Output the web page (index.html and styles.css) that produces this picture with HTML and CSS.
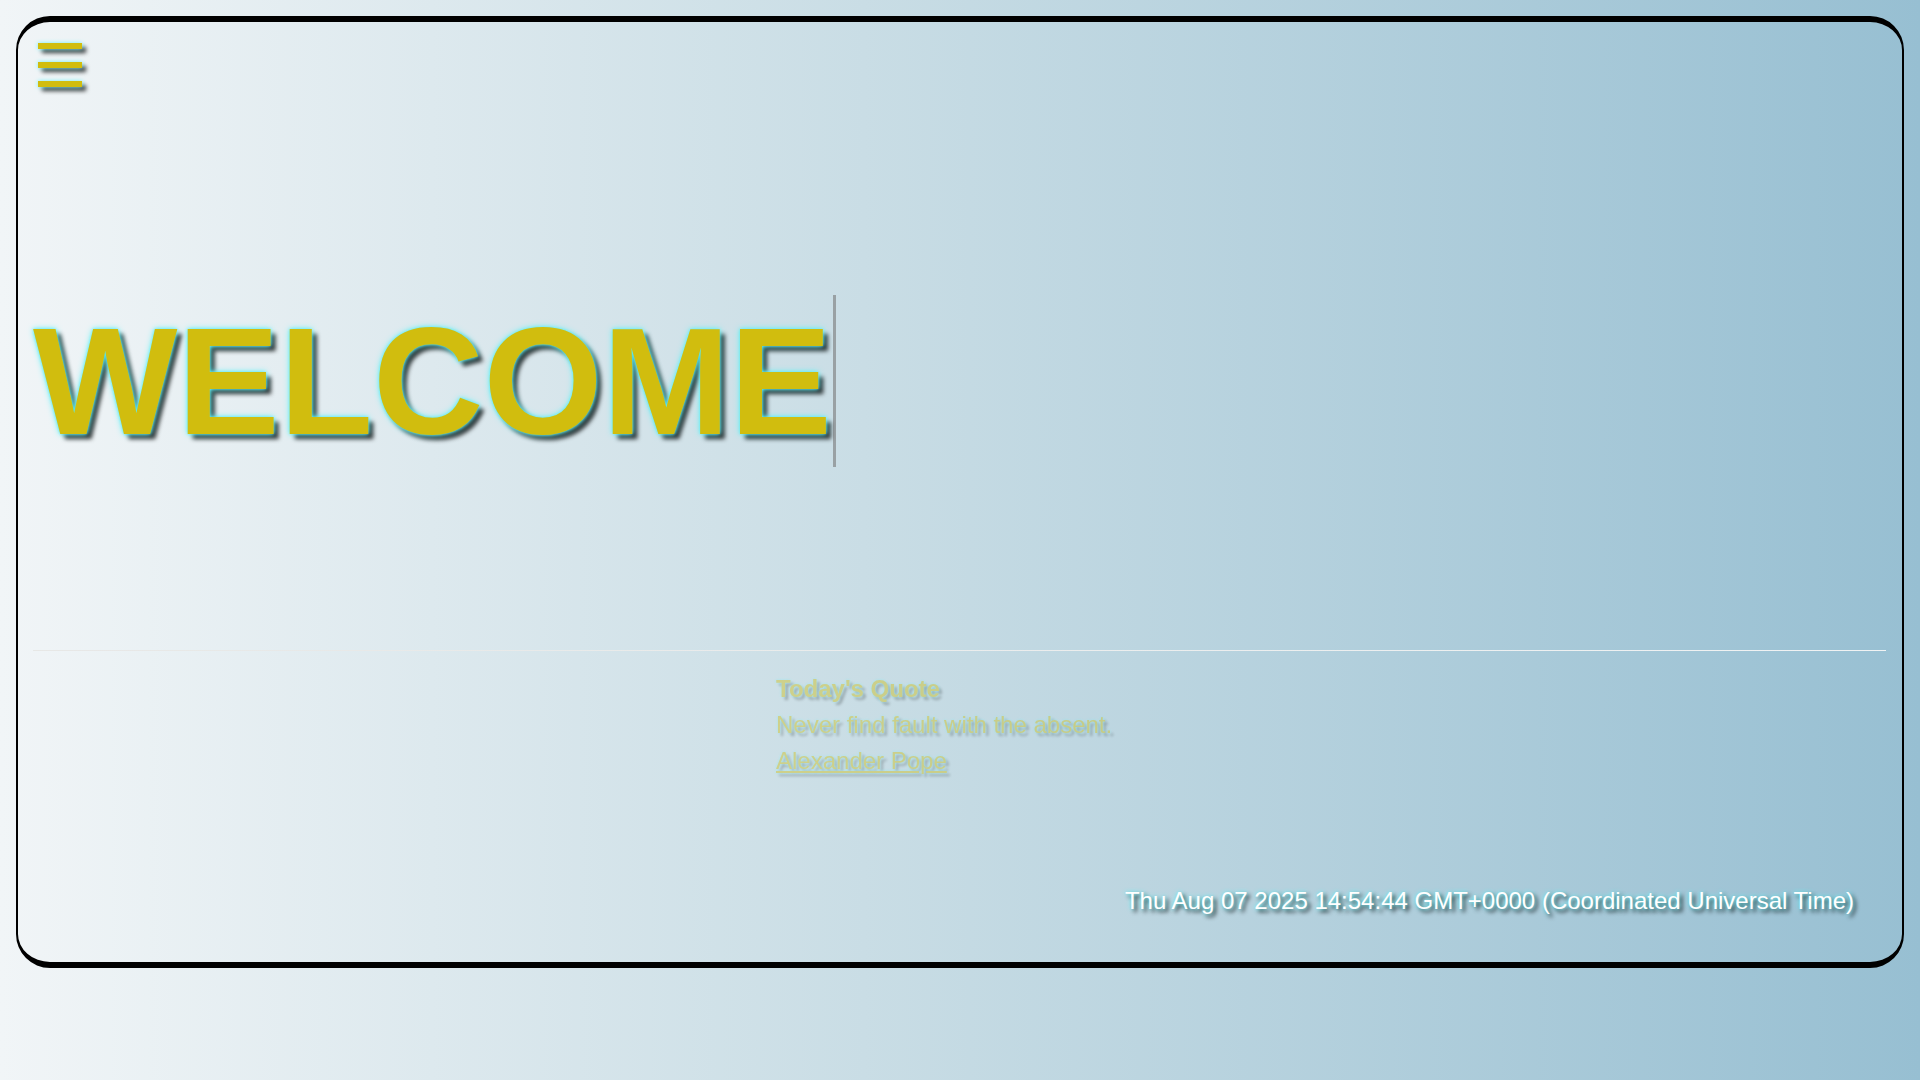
FILE: index.html
```html
<!DOCTYPE html>
<html lang="en">
<head>
<meta charset="utf-8">
<title>Welcome</title>
<link rel="stylesheet" href="styles.css">
</head>
<body>
<div class="page">
  <main class="card">
    <button class="menu" aria-label="Menu">
      <span class="bar"></span>
      <span class="bar"></span>
      <span class="bar"></span>
    </button>
    <section class="hero">
      <h1 class="title"><span class="typed">WELCOME</span></h1>
    </section>
    <hr class="divider">
    <section class="quote">
      <h3 class="quote-title">Today's Quote</h3>
      <p class="quote-text">Never find fault with the absent.</p>
      <a class="quote-author" href="#">Alexander Pope</a>
    </section>
    <footer class="clock">Thu Aug 07 2025 14:54:44 GMT+0000 (Coordinated Universal Time)</footer>
  </main>
</div>
</body>
</html>
```
FILE: styles.css
```css
html, body {
  margin: 0;
  padding: 0;
}
html {
  background: linear-gradient(to right, #f1f5f7 0%, #c9dde5 45%, #97bfd2 100%);
  min-height: 100%;
}
body {
  min-height: 100vh;
  font-family: "Liberation Sans", Arial, sans-serif;
}
.page {
  padding: 16px 16px 0 16px;
}
.card {
  box-sizing: border-box;
  height: 952px;
  border-style: solid;
  border-color: #000;
  border-width: 6px 2px 6px 2px;
  border-radius: 34px;
  padding: 21px 15px 47px 15px;
  display: flex;
  flex-direction: column;
}
.menu {
  align-self: flex-start;
  margin: 0 0 0 5px;
  padding: 0;
  border: 0;
  background: none;
  display: flex;
  flex-direction: column;
  gap: 13px;
  cursor: pointer;
}
.bar {
  display: block;
  width: 44px;
  height: 6px;
  background: #d1bd0e;
  box-shadow: 0 0 4px #6ff3f7, 4px 4px 4px rgba(0, 0, 0, 0.75);
}
.hero {
  padding-top: 208px;
  height: 355px;
}
.title {
  margin: 0;
  font-size: 153px;
  font-weight: 700;
  line-height: 1.123;
  color: #d1bd0e;
  text-shadow: 0 0 6px #5ff0f5, 0 0 3px #5ff0f5, 5px 5px 4px rgba(0, 0, 0, 0.8);
}
.typed {
  display: inline-block;
  padding-right: 1px;
  border-right: 3px solid rgba(120, 120, 120, 0.6);
}
.divider {
  margin: 0 1px 0 0;
  border: 0;
  height: 1px;
  background: linear-gradient(to right, rgba(230, 230, 228, 0.9), rgba(245, 245, 245, 0.95));
}
.quote {
  margin: 20px 0 0 743px;
  font-size: 24px;
  line-height: 36px;
  color: #d1bd0e;
  opacity: 0.42;
  text-shadow: 0 0 3px #5ff0f5, 3px 3px 3px rgba(0, 0, 0, 0.6);
}
.quote-title {
  margin: 0;
  font-size: 24px;
  font-weight: 700;
}
.quote-text {
  margin: 0;
}
.quote-author {
  color: #d1bd0e;
  text-decoration: underline;
}
.clock {
  margin-top: auto;
  align-self: flex-end;
  margin-right: 33px;
  font-size: 24px;
  line-height: 28px;
  color: #ffffff;
  text-shadow: 0 0 4px #5ff0f5, 3px 3px 4px rgba(0, 0, 0, 0.85);
}
```
